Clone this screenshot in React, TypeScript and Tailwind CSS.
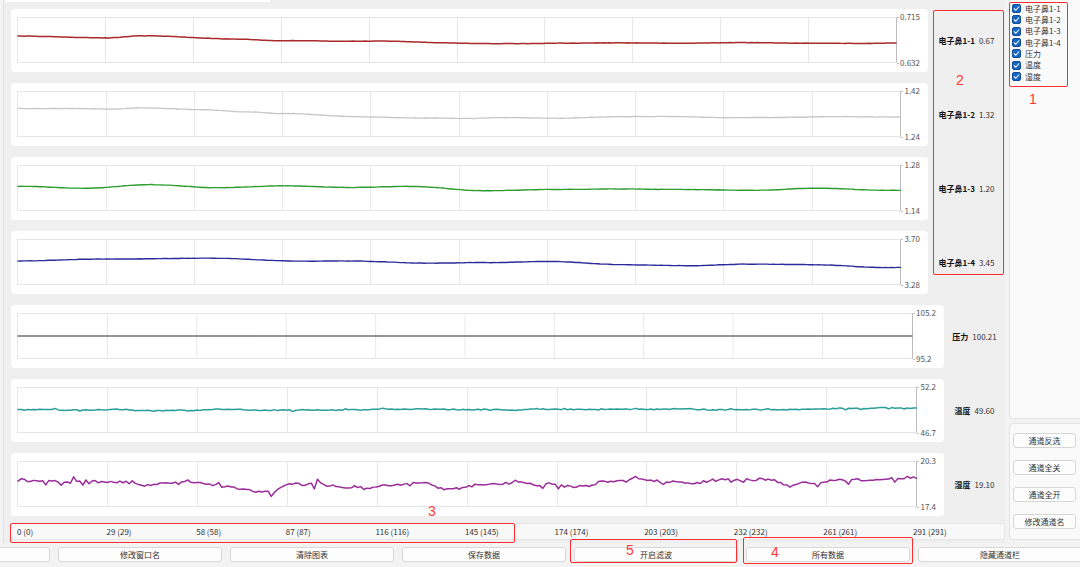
import React from "react";

function mulberry32(a: number) {
  return function () {
    a |= 0;
    a = (a + 0x6d2b79f5) | 0;
    let t = Math.imul(a ^ (a >>> 15), 1 | a);
    t = (t + Math.imul(t ^ (t >>> 7), 61 | t)) ^ t;
    return ((t ^ (t >>> 14)) >>> 0) / 4294967296;
  };
}

type Series = {
  color: string;
  width: number;
  ctrl: [number, number][];
  wave: number;
  step: number;
  jitter: number;
  walk: number;
  spikes: number;
  seed: number;
};

function buildPath(s: Series): string {
  const N = 292;
  const rnd = mulberry32(s.seed);
  const coarse = Array.from({ length: Math.ceil(N / s.step) + 2 }, () => rnd() * 2 - 1);
  const pts: string[] = [];
  let w = 0;
  for (let i = 0; i < N; i++) {
    const f = i / (N - 1);
    let y = s.ctrl[s.ctrl.length - 1][1];
    for (let k = 0; k < s.ctrl.length - 1; k++) {
      const [x0, y0] = s.ctrl[k];
      const [x1, y1] = s.ctrl[k + 1];
      if (f >= x0 && f <= x1) {
        const t = (f - x0) / (x1 - x0 || 1);
        const c = (1 - Math.cos(Math.PI * t)) / 2;
        y = y0 + (y1 - y0) * c;
        break;
      }
    }
    const ci = Math.floor(i / s.step);
    const ct = (i % s.step) / s.step;
    const cc = (1 - Math.cos(Math.PI * ct)) / 2;
    const smooth = coarse[ci] * (1 - cc) + coarse[ci + 1] * cc;
    w = w * 0.85 + (rnd() * 2 - 1) * s.walk;
    const r = rnd();
    const spike = r < 0.12 ? (rnd() * 2 - 1) * s.spikes : 0;
    y += smooth * s.wave + (rnd() * 2 - 1) * s.jitter + w + spike;
    pts.push(`${(f * 1000).toFixed(1)},${y.toFixed(2)}`);
  }
  return "M" + pts.join(" L");
}

type Row = {
  name: string;
  value: string;
  top: string;
  bottom: string;
  wide: boolean;
  s: Series;
};

const rows: Row[] = [
  {
    name: "电子鼻1-1",
    value: "0.67",
    top: "0.715",
    bottom: "0.632",
    wide: false,
    s: {
      color: "#a82a2a",
      width: 1.5,
      ctrl: [
        [0, 41],
        [0.1, 45],
        [0.14, 40],
        [0.25, 47],
        [0.31, 51],
        [0.4, 54],
        [0.55, 58],
        [0.75, 56],
        [1, 57],
      ],
      wave: 2,
      step: 20,
      jitter: 0.3,
      walk: 0,
      spikes: 0,
      seed: 11,
    },
  },
  {
    name: "电子鼻1-2",
    value: "1.32",
    top: "1.42",
    bottom: "1.24",
    wide: false,
    s: {
      color: "#c6c6c6",
      width: 1.3,
      ctrl: [
        [0, 39],
        [0.1, 39],
        [0.14, 36],
        [0.21, 41],
        [0.26, 46],
        [0.3, 50],
        [0.39, 56],
        [0.55, 60],
        [0.7, 57],
        [1, 56],
      ],
      wave: 1.8,
      step: 18,
      jitter: 0.4,
      walk: 0,
      spikes: 0,
      seed: 23,
    },
  },
  {
    name: "电子鼻1-3",
    value: "1.20",
    top: "1.28",
    bottom: "1.14",
    wide: false,
    s: {
      color: "#2e9c2e",
      width: 1.4,
      ctrl: [
        [0, 46],
        [0.4, 48],
        [0.52, 52],
        [1, 53],
      ],
      wave: 4.5,
      step: 22,
      jitter: 0.3,
      walk: 0,
      spikes: 0,
      seed: 37,
    },
  },
  {
    name: "电子鼻1-4",
    value: "3.45",
    top: "3.70",
    bottom: "3.28",
    wide: false,
    s: {
      color: "#2b2b9a",
      width: 1.4,
      ctrl: [
        [0, 45],
        [0.2, 41],
        [0.4, 48],
        [0.55, 52],
        [0.8, 56],
        [1, 59],
      ],
      wave: 4,
      step: 22,
      jitter: 0.3,
      walk: 0,
      spikes: 0,
      seed: 41,
    },
  },
  {
    name: "压力",
    value: "100.21",
    top: "105.2",
    bottom: "95.2",
    wide: true,
    s: {
      color: "#727272",
      width: 1.5,
      ctrl: [
        [0, 50],
        [1, 50],
      ],
      wave: 0,
      step: 20,
      jitter: 0,
      walk: 0,
      spikes: 0,
      seed: 5,
    },
  },
  {
    name: "温度",
    value: "49.60",
    top: "52.2",
    bottom: "46.7",
    wide: true,
    s: {
      color: "#2a9e9a",
      width: 1.5,
      ctrl: [
        [0, 50],
        [0.85, 49],
        [1, 45],
      ],
      wave: 1.6,
      step: 8,
      jitter: 1.0,
      walk: 0,
      spikes: 3,
      seed: 77,
    },
  },
  {
    name: "湿度",
    value: "19.10",
    top: "20.3",
    bottom: "17.4",
    wide: true,
    s: {
      color: "#9b2d9b",
      width: 1.5,
      ctrl: [
        [0, 44],
        [0.1, 40],
        [0.2, 50],
        [0.27, 60],
        [0.35, 55],
        [0.6, 50],
        [0.8, 46],
        [1, 38],
      ],
      wave: 7,
      step: 10,
      jitter: 2.5,
      walk: 2.6,
      spikes: 9,
      seed: 93,
    },
  },
];

const ticks = ["0 (0)", "29 (29)", "58 (58)", "87 (87)", "116 (116)", "145 (145)", "174 (174)", "203 (203)", "232 (232)", "261 (261)", "291 (291)"];

const checks = ["电子鼻1-1", "电子鼻1-2", "电子鼻1-3", "电子鼻1-4", "压力", "温度", "湿度"];

const sideButtons = ["通道反选", "通道全关", "通道全开", "修改通道名"];

const bottomButtons = ["", "修改窗口名", "清除图表", "保存数据", "开启滤波", "所有数据", "隐藏通道栏"];

function Plot({ s }: { s: Series }) {
  const d = React.useMemo(() => buildPath(s), [s]);
  return (
    <div className="relative flex-1 border-y border-l border-[#e6e6e6] border-r border-r-[#bcbcbc]">
      <svg className="absolute inset-0 w-full h-full overflow-visible" viewBox="0 0 1000 100" preserveAspectRatio="none">
        {[1, 2, 3, 4, 5, 6, 7, 8, 9].map((i) => (
          <line
            key={i}
            x1={i * 100}
            x2={i * 100}
            y1={0}
            y2={100}
            stroke="#e8e8e8"
            strokeWidth={1}
            vectorEffect="non-scaling-stroke"
            shapeRendering="crispEdges"
          />
        ))}
        <path d={d} fill="none" stroke={s.color} strokeWidth={s.width} strokeLinejoin="round" strokeLinecap="round" vectorEffect="non-scaling-stroke" />
      </svg>
    </div>
  );
}

function ChartRow({ r }: { r: Row }) {
  return (
    <div className="flex h-[63px] shrink-0">
      <div className={(r.wide ? "w-[933px]" : "w-[917px]") + " flex bg-white rounded-[4px] pl-[6px] pr-[8px] pt-[8px] pb-[9px]"}>
        <Plot s={r.s} />
        <div className="flex flex-col justify-between -my-[6px] text-[8px] leading-[12px] text-[#555]">
          <div className="flex items-center">
            <span className="w-[2px] h-px bg-[#bcbcbc]" />
            <span className="ml-px">{r.top}</span>
          </div>
          <div className="flex items-center">
            <span className="w-[2px] h-px bg-[#bcbcbc]" />
            <span className="ml-px">{r.bottom}</span>
          </div>
        </div>
      </div>
      <div className="flex-1 flex items-center justify-center gap-[4px] text-[8px] leading-[12px]">
        <span className="font-bold text-[#111]">{r.name}</span>
        <span className="text-[#333]">{r.value}</span>
      </div>
    </div>
  );
}

function CheckIcon() {
  return (
    <span className="w-[9px] h-[9px] rounded-[2px] bg-[#1766c2] border border-[#0f4f9a] flex items-center justify-center">
      <svg width="7" height="7" viewBox="0 0 8 8">
        <path d="M1.3 4.2 L3.2 6 L6.8 2" fill="none" stroke="#fff" strokeWidth="1.2" strokeLinecap="round" strokeLinejoin="round" />
      </svg>
    </span>
  );
}

export default function App() {
  return (
    <div
      className="relative w-[1080px] h-[567px] overflow-hidden bg-[#f3f3f3] flex flex-col"
      style={{ fontFamily: '"Noto Sans CJK SC", "Noto Sans", sans-serif' }}
    >
      <div className="flex h-[543px] shrink-0">
        <div className="w-[1005px] shrink-0 bg-[#f3f3f3]">
          <div className="ml-[3px] h-full border-l border-[#e2e2e2] bg-[#efefef] pl-[7px] flex flex-col">
            <div className="-ml-[6px] w-[265px] h-[2px] bg-white shrink-0" />
            <div className="mt-[7px] flex flex-col gap-[11px]">
              {rows.map((r) => (
                <ChartRow key={r.name} r={r} />
              ))}
            </div>
            <div className="mt-[7px] -ml-[1px] h-[17px] w-[995px] bg-[#f8f8f8] border border-[#e6e6e6] rounded-[3px] flex items-center pl-[6px] text-[8px] text-[#333] leading-[12px]">
              {ticks.map((t, i) => (
                <span key={t} className={i < 10 ? "w-[89.6px] shrink-0" : "shrink-0"}>
                  {t}
                </span>
              ))}
            </div>
          </div>
        </div>
        <div className="ml-[4px] w-[76px] shrink-0 flex flex-col">
          <div className="h-[419px] bg-[#fafafa] border border-t-0 border-[#e3e3e3] rounded-b-[4px] pl-[2px] pt-[3px] flex flex-col">
            {checks.map((c) => (
              <div key={c} className="h-[11.33px] flex items-center">
                <CheckIcon />
                <span className="ml-[4px] text-[8px] leading-[10px] text-[#333]">{c}</span>
              </div>
            ))}
          </div>
          <div className="mt-[4px] h-[117px] bg-[#fafafa] border border-[#e3e3e3] rounded-[4px] pl-[3px] pt-[9px] flex flex-col gap-[12px]">
            {sideButtons.map((b) => (
              <div
                key={b}
                className="w-[63px] h-[15px] bg-[#fdfdfd] border border-[#d6d6d6] rounded-[3px] flex items-center justify-center text-[8px] text-[#333]"
              >
                {b}
              </div>
            ))}
          </div>
        </div>
      </div>
      <div className="flex gap-[8px] -ml-[114px] pt-[4px]">
        {bottomButtons.map((b, i) => (
          <div
            key={i}
            className="w-[164px] h-[15px] shrink-0 bg-[#fdfdfd] border border-[#d8d8d8] rounded-[3px] flex items-center justify-center text-[8px] text-[#333]"
          >
            {b}
          </div>
        ))}
      </div>

      {/* annotation overlays */}
      <div className="absolute left-[1009px] top-[2px] w-[59px] h-[85px] border-[1.5px] border-[#ff2d2d] rounded-[2px]" />
      <div className="absolute left-[1029px] top-[91px] text-[14px] leading-[16px] text-[#ff3b30]" style={{ fontFamily: '"Liberation Sans", sans-serif' }}>
        1
      </div>
      <div className="absolute left-[933px] top-[10px] w-[71px] h-[265px] border-[1.5px] border-[#ff2d2d] rounded-[2px]" />
      <div className="absolute left-[956px] top-[72px] text-[14px] leading-[16px] text-[#ff3b30]" style={{ fontFamily: '"Liberation Sans", sans-serif' }}>
        2
      </div>
      <div className="absolute left-[10px] top-[523px] w-[505px] h-[20px] border-[1.5px] border-[#ff2d2d] rounded-[2px]" />
      <div className="absolute left-[428px] top-[503px] text-[14px] leading-[16px] text-[#ff3b30]" style={{ fontFamily: '"Liberation Sans", sans-serif' }}>
        3
      </div>
      <div className="absolute left-[570px] top-[539px] w-[167px] h-[24px] border-[1.5px] border-[#ff2d2d] rounded-[2px]" />
      <div className="absolute left-[626px] top-[542px] text-[14px] leading-[16px] text-[#ff3b30]" style={{ fontFamily: '"Liberation Sans", sans-serif' }}>
        5
      </div>
      <div className="absolute left-[743px] top-[537px] w-[170px] h-[27px] border-[1.5px] border-[#ff2d2d] rounded-[2px]" />
      <div className="absolute left-[771px] top-[544px] text-[14px] leading-[16px] text-[#ff3b30]" style={{ fontFamily: '"Liberation Sans", sans-serif' }}>
        4
      </div>
    </div>
  );
}
